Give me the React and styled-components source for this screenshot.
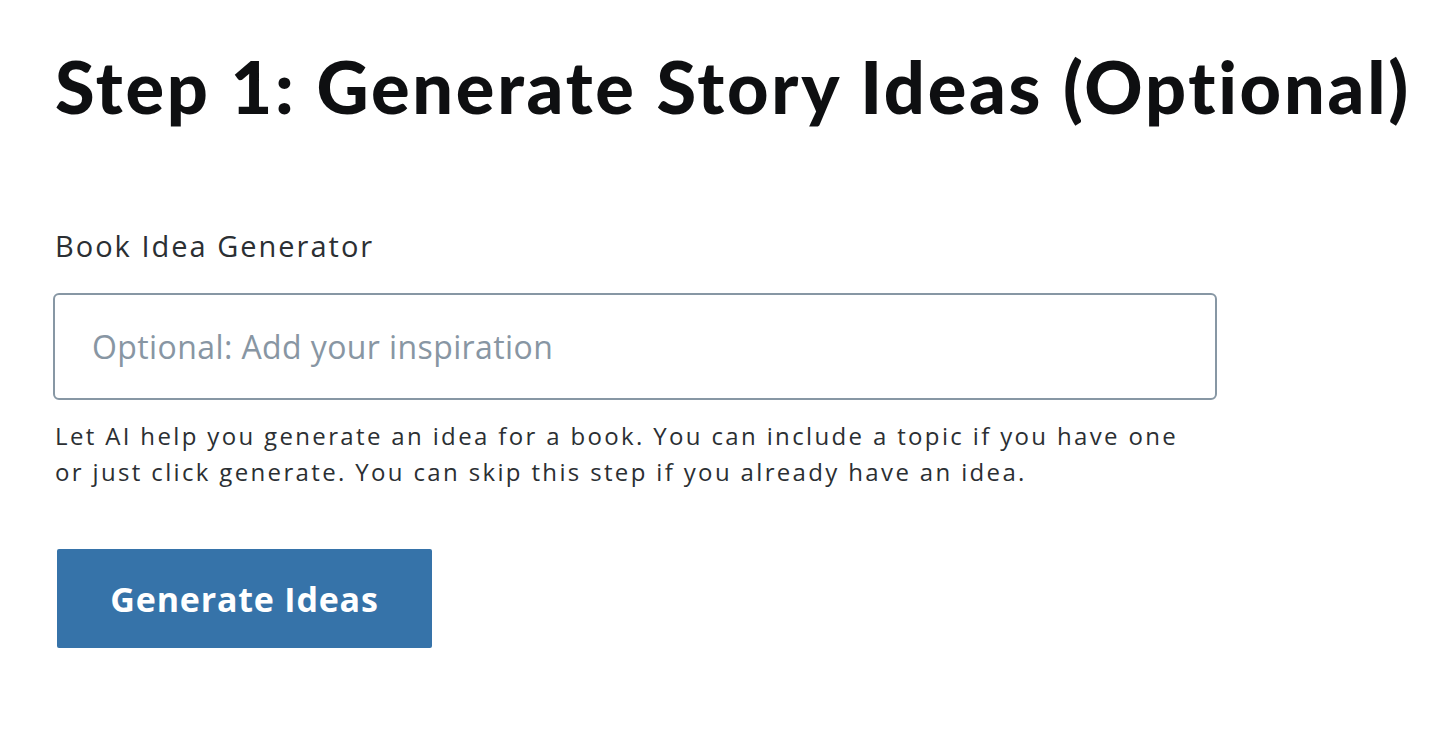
import React from 'react'
import styled, { createGlobalStyle } from 'styled-components'

const GlobalStyle = createGlobalStyle`
  body {
    margin: 0;
    background: #fff;
    font-family: "Open Sans", "Liberation Sans", sans-serif;
  }
`

const Page = styled.div`
  padding: 38px 0 0 55px;
  width: 1162px;
`

const Title = styled.h1`
  margin: 0;
  font-family: Lato, "Liberation Sans", sans-serif;
  font-size: 72px;
  font-weight: 900;
  letter-spacing: 2.75px;
  color: #0e0f11;
  line-height: 96px;
  white-space: nowrap;
`

const Field = styled.div`
  margin-top: 94px;
  display: flex;
  flex-direction: column;
`

const Label = styled.label`
  font-size: 29px;
  letter-spacing: 2px;
  color: #2b2f33;
  line-height: 36px;
`

const Input = styled.input`
  margin-top: 29px;
  margin-left: -2px;
  height: 107px;
  box-sizing: border-box;
  border: 2px solid #8797a4;
  border-radius: 6px;
  padding: 0 37px;
  font-family: inherit;
  font-size: 32px;
  letter-spacing: 0.4px;
  color: #2b2f33;
  outline: none;

  &::placeholder {
    color: #8896a3;
  }
`

const Help = styled.p`
  margin: 18px 0 0;
  font-size: 24px;
  letter-spacing: 2.35px;
  line-height: 36px;
  color: #2b2f33;
  max-width: 1160px;
`

const Button = styled.button`
  margin-top: 59px;
  margin-left: 2px;
  width: 375px;
  height: 99px;
  border: none;
  border-radius: 2px;
  background: #3673a9;
  color: #fff;
  font-family: inherit;
  font-size: 34px;
  font-weight: 700;
  letter-spacing: 0.8px;
  cursor: pointer;
`

const App = () => {
  return (
    <Page>
      <GlobalStyle />
      <Title>Step 1: Generate Story Ideas (Optional)</Title>
      <Field>
        <Label htmlFor="inspiration">Book Idea Generator</Label>
        <Input id="inspiration" placeholder="Optional: Add your inspiration" />
        <Help>
          Let AI help you generate an idea for a book. You can include a topic if you have one
          or just click generate. You can skip this step if you already have an idea.
        </Help>
      </Field>
      <Button type="button">Generate Ideas</Button>
    </Page>
  )
}

export default App
